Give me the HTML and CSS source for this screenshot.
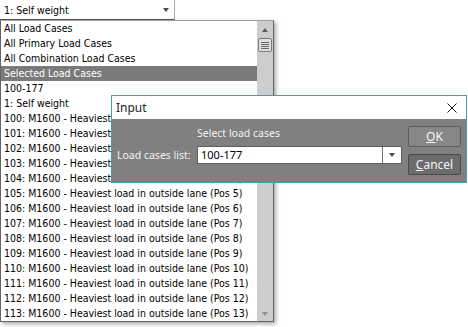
FILE: index.html
```html
<!DOCTYPE html>
<html>

<head>
    <title>Input - Load cases</title>
    <link rel="stylesheet" href="styles.css">
</head>

<body>
    <div class="screen">
        <div class="combo">
            <span>1: Self weight</span>
            <span class="tri-down"></span>
        </div>

        <div class="droplist">
            <ul class="items">
                <li>All Load Cases</li>
                <li>All Primary Load Cases</li>
                <li>All Combination Load Cases</li>
                <li class="sel">Selected Load Cases</li>
                <li>100-177</li>
                <li>1: Self weight</li>
                <li>100: M1600 - Heaviest load in outside lane (Pos 0)</li>
                <li>101: M1600 - Heaviest load in outside lane (Pos 1)</li>
                <li>102: M1600 - Heaviest load in outside lane (Pos 2)</li>
                <li>103: M1600 - Heaviest load in outside lane (Pos 3)</li>
                <li>104: M1600 - Heaviest load in outside lane (Pos 4)</li>
                <li>105: M1600 - Heaviest load in outside lane (Pos 5)</li>
                <li>106: M1600 - Heaviest load in outside lane (Pos 6)</li>
                <li>107: M1600 - Heaviest load in outside lane (Pos 7)</li>
                <li>108: M1600 - Heaviest load in outside lane (Pos 8)</li>
                <li>109: M1600 - Heaviest load in outside lane (Pos 9)</li>
                <li>110: M1600 - Heaviest load in outside lane (Pos 10)</li>
                <li>111: M1600 - Heaviest load in outside lane (Pos 11)</li>
                <li>112: M1600 - Heaviest load in outside lane (Pos 12)</li>
                <li>113: M1600 - Heaviest load in outside lane (Pos 13)</li>
            </ul>
            <div class="vscroll">
                <span class="tri-up"></span>
                <div class="thumb"><i></i><i></i><i></i><i></i></div>
                <span class="tri-down light"></span>
            </div>
        </div>

        <!-- modal dialog sits over the open list -->
        <div class="dialog">
            <div class="titlebar">
                <span>Input</span>
                <svg width="10" height="10" viewBox="0 0 10 10">
                    <path d="M0.5 0.5 L9.5 9.5 M9.5 0.5 L0.5 9.5" stroke="#111" stroke-width="1" fill="none" />
                </svg>
            </div>
            <div class="dialog-body">
                <div class="fields">
                    <span></span>
                    <span class="caption">Select load cases</span>
                    <label for="cases">Load cases list:</label>
                    <div class="select" id="cases">
                        <span class="value">100-177</span>
                        <span class="select-btn"><span class="tri-down"></span></span>
                    </div>
                </div>
                <div class="buttons">
                    <button class="btn"><u>O</u>K</button>
                    <button class="btn btn-focus"><u>C</u>ancel</button>
                </div>
            </div>
        </div>
    </div>
</body>

</html>
```

FILE: styles.css
```css
* {
    box-sizing: border-box;
}

body {
    margin: 0;
    background-color: #fff;
    font-family: "DejaVu Sans Condensed", "DejaVu Sans", sans-serif;
    font-stretch: condensed;
    font-size: 10.5px;
    color: #000;
}

.screen {
    position: relative;
    width: 468px;
    height: 327px;
    overflow: hidden;
}

/* combo box at the top */
.combo {
    width: 175px;
    height: 20px;
    padding: 0 5px 0 4px;
    display: flex;
    align-items: center;
    justify-content: space-between;
    border-right: 1px solid #acacac;
    border-bottom: 1px solid #5a5a5a;
}

.tri-down {
    width: 0;
    height: 0;
    border-left: 3.5px solid transparent;
    border-right: 3.5px solid transparent;
    border-top: 4px solid #4a4a4a;
}

.tri-up {
    width: 0;
    height: 0;
    border-left: 3.5px solid transparent;
    border-right: 3.5px solid transparent;
    border-bottom: 4px solid #5a5a5a;
}

.tri-down.light {
    border-top-color: #8e8e8e;
}

/* dropped down list */
.droplist {
    width: 274px;
    height: 302px;
    display: flex;
    border: 1px solid #646464;
    border-top-color: #a0a0a0;
    box-shadow: 2px 2px 4px rgba(0, 0, 0, 0.35);
}

.items {
    flex: 1;
    margin: 0;
    padding: 0;
    list-style: none;
    overflow: hidden;
}

.items li {
    height: 15px;
    line-height: 15px;
    padding-left: 3px;
    white-space: nowrap;
}

.items li.sel {
    background-color: #7a7a7a;
    color: #fff;
}

.vscroll {
    width: 16px;
    padding: 7px 0 5px;
    display: flex;
    flex-direction: column;
    align-items: center;
    background-color: #cdcdcd;
}

.thumb {
    width: 14px;
    height: 14px;
    margin-top: 6px;
    display: flex;
    flex-direction: column;
    align-items: center;
    justify-content: center;
    gap: 1px;
    border: 1px solid #7d7d7d;
    border-radius: 2px;
    background-color: #dedede;
}

.thumb i {
    display: block;
    width: 8px;
    height: 1px;
    background-color: #6a6a6a;
}

.vscroll .light {
    margin-top: auto;
}

/* Input dialog */
.dialog {
    position: absolute;
    left: 111px;
    top: 95px;
    width: 356px;
    height: 88px;
    display: flex;
    flex-direction: column;
    border: 1px solid #3d9fb6;
    background-color: #808080;
    font-family: "Noto Sans", "Open Sans", sans-serif;
    font-stretch: normal;
    font-size: 10.5px;
}

.titlebar {
    height: 23px;
    padding: 0 9px 0 4px;
    display: flex;
    align-items: center;
    justify-content: space-between;
    background-color: #fff;
    color: #1e1e1e;
    font-size: 12px;
}

.dialog-body {
    flex: 1;
    padding: 7px 4px 0 5px;
    display: flex;
    gap: 6px;
}

.fields {
    display: grid;
    grid-template-columns: 74px 205px;
    grid-template-rows: 14px 18px;
    column-gap: 6px;
    row-gap: 6px;
    align-items: center;
    color: #f2f2f2;
    white-space: nowrap;
}

.caption {
    line-height: 14px;
}

.select {
    height: 18px;
    display: flex;
    border: 1px solid #5e5e5e;
    background-color: #fff;
    color: #000;
}

.select .value {
    flex: 1;
    padding-left: 3px;
    line-height: 16px;
    font-size: 11px;
}

.select-btn {
    width: 19px;
    display: flex;
    align-items: center;
    justify-content: center;
    border-left: 1px solid #6e6e6e;
}

.buttons {
    display: flex;
    flex-direction: column;
    gap: 7px;
}

.btn {
    width: 53px;
    height: 21px;
    padding: 0;
    border: 1px solid #5c5c5c;
    border-radius: 2px;
    background-color: #878787;
    color: #f4f4f4;
    font-family: "Noto Sans", "Open Sans", sans-serif;
    font-size: 12px;
}

.btn-focus {
    background-color: #6c6c6c;
    border-color: #4a4a4a;
}
```
